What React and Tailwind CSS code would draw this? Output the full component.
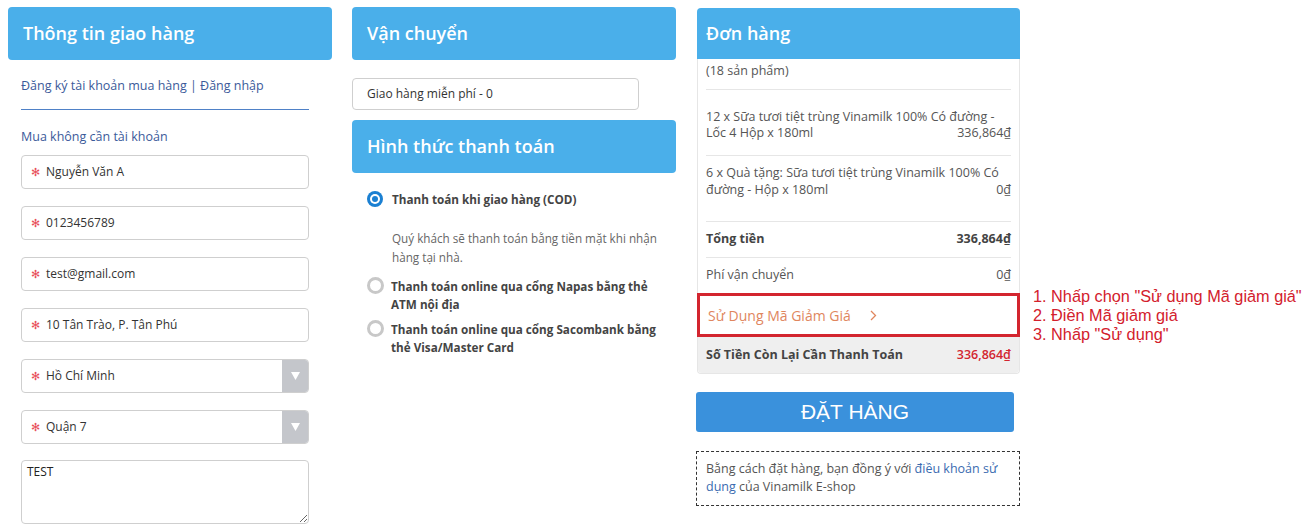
import React from 'react'

// Checkout page: 3 columns (shipping info / shipping + payment / order) + note

const FONT = "font-['Open_Sans',sans-serif]"
const VND = (n) => `${n}\u20ab`

function Header({ title, className = '' }) {
  return (
    <div className={`flex h-[53px] items-center rounded-[4px] bg-[#4aafea] pl-[15px] ${className}`}>
      <span className="text-[18px] font-semibold text-white">{title}</span>
    </div>
  )
}

function Field({ value, select }) {
  return (
    <div className="flex h-[34px] w-[288px] items-stretch overflow-hidden rounded-[4px] border border-[#cfcfcf] bg-white">
      <div className="flex flex-1 items-center pl-[9px] text-[12px] text-[#333]">
        <span className="mr-[6px] text-[11px] text-[#e8505b]">{'\u273b'}</span>
        {value}
      </div>
      {select && (
        <div className="flex w-[26px] items-center justify-center bg-[#c4c6cb]">
          <svg width="9" height="8" viewBox="0 0 9 8">
            <path d="M0 0 H9 L4.5 8 Z" fill="#fff" />
          </svg>
        </div>
      )}
    </div>
  )
}

function Radio({ checked }) {
  return checked ? (
    <span className="grid h-[16px] w-[16px] shrink-0 place-items-center rounded-full bg-[#1b80d2]">
      <span className="grid h-[10px] w-[10px] place-items-center rounded-full bg-white">
        <span className="block h-[6px] w-[6px] rounded-full bg-[#1b80d2]" />
      </span>
    </span>
  ) : (
    <span className="block h-[17px] w-[17px] shrink-0 rounded-full border-[3px] border-[#c8c8c8] bg-white" />
  )
}

export default function App() {
  return (
    <div className={`flex h-[526px] w-[1308px] items-start overflow-hidden bg-white pl-[8px] ${FONT}`}>
      {/* column 1 */}
      <div className="mt-[7px] w-[324px] shrink-0">
        <Header title={'Th\u00f4ng tin giao h\u00e0ng'} />
        <div className="pl-[13px]">
          <div className="mt-[16px] w-[288px] border-b border-[#4f81c7] pb-[13px] text-[12.5px] leading-[20px] text-[#3b5a9a]">
            {'\u0110\u0103ng k\u00fd t\u00e0i kho\u1ea3n mua h\u00e0ng | \u0110\u0103ng nh\u1eadp'}
          </div>
          <div className="mt-[17px] text-[12.5px] leading-[20px] text-[#3b5a9a]">
            {'Mua kh\u00f4ng c\u1ea7n t\u00e0i kho\u1ea3n'}
          </div>
          <div className="mt-[8px] flex flex-col gap-[17px]">
            <Field value={'Nguy\u1ec5n V\u0103n A'} />
            <Field value="0123456789" />
            <Field value="test@gmail.com" />
            <Field value={'10 T\u00e2n Tr\u00e0o, P. T\u00e2n Ph\u00fa'} />
            <Field value={'H\u1ed3 Ch\u00ed Minh'} select />
            <Field value={'Qu\u1eadn 7'} select />
          </div>
          <textarea
            defaultValue="TEST"
            className="mt-[16px] block h-[64px] w-[288px] rounded-[4px] border border-[#cfcfcf] px-[5px] py-[2px] text-[12px] text-[#222] outline-none"
          />
        </div>
      </div>

      {/* column 2 */}
      <div className="ml-[20px] mt-[7px] w-[324px] shrink-0">
        <Header title={'V\u1eadn chuy\u1ec3n'} />
        <div className="mt-[18px] flex h-[32px] w-[287px] items-center rounded-[4px] border border-[#cfcfcf] pl-[14px] text-[12px] text-[#333]">
          {'Giao h\u00e0ng mi\u1ec5n ph\u00ed - 0'}
        </div>
        <Header title={'H\u00ecnh th\u1ee9c thanh to\u00e1n'} className="mt-[10px]" />
        <div className="pl-[15px] text-[11.7px] text-[#444]">
          <div className="mt-[17px] flex items-center gap-[9px] leading-[18px]">
            <Radio checked />
            <span className="font-bold">{'Thanh to\u00e1n khi giao h\u00e0ng (COD)'}</span>
          </div>
          <p className="mt-[21px] pl-[25px] leading-[19px] text-[#666]">
            {'Qu\u00fd kh\u00e1ch s\u1ebd thanh to\u00e1n b\u1eb1ng ti\u1ec1n m\u1eb7t khi nh\u1eadn'}
            <br />
            {'h\u00e0ng t\u1ea1i nh\u00e0.'}
          </p>
          <div className="mt-[10px] flex items-start gap-[7px] leading-[18px]">
            <Radio />
            <span className="font-bold">
              {'Thanh to\u00e1n online qua c\u1ed5ng Napas b\u1eb1ng th\u1ebb'}
              <br />
              {'ATM n\u1ed9i \u0111\u1ecba'}
            </span>
          </div>
          <div className="mt-[7px] flex items-start gap-[7px] leading-[18px]">
            <Radio />
            <span className="font-bold">
              {'Thanh to\u00e1n online qua c\u1ed5ng Sacombank b\u1eb1ng'}
              <br />
              {'th\u1ebb Visa/Master Card'}
            </span>
          </div>
        </div>
      </div>

      {/* column 3: order */}
      <div className="ml-[21px] mt-[8px] w-[323px] shrink-0">
        <div className="flex h-[51px] items-center rounded-t-[4px] bg-[#4aafea] pl-[9px]">
          <span className="text-[18px] font-semibold text-white">{'\u0110\u01a1n h\u00e0ng'}</span>
        </div>
        <div className="rounded-b-[4px] border border-t-0 border-[#e6e6e6] text-[12.5px] text-[#555]">
          <div className="px-[8px]">
            <div className="border-b border-[#e6e6e6] pb-[8px] pt-[2px] leading-[20px]">
              {'(18 s\u1ea3n ph\u1ea9m)'}
            </div>
            <div className="border-b border-[#e6e6e6] pb-[14px] pt-[19px] leading-[16px]">
              <div>{'12 x S\u1eefa t\u01b0\u01a1i ti\u1ec7t tr\u00f9ng Vinamilk 100% C\u00f3 \u0111\u01b0\u1eddng -'}</div>
              <div className="flex justify-between">
                <span>{'L\u1ed1c 4 H\u1ed9p x 180ml'}</span>
                <span>{VND('336,864')}</span>
              </div>
            </div>
            <div className="border-b border-[#e6e6e6] pb-[23px] pt-[8px] leading-[17px]">
              <div>{'6 x Qu\u00e0 t\u1eb7ng: S\u1eefa t\u01b0\u01a1i ti\u1ec7t tr\u00f9ng Vinamilk 100% C\u00f3'}</div>
              <div className="flex justify-between">
                <span>{'\u0111\u01b0\u1eddng - H\u1ed9p x 180ml'}</span>
                <span>{VND('0')}</span>
              </div>
            </div>
            <div className="flex h-[36px] items-center justify-between border-b border-[#e6e6e6] font-bold text-[#444]">
              <span>{'T\u1ed5ng ti\u1ec1n'}</span>
              <span>{VND('336,864')}</span>
            </div>
            <div className="flex h-[35px] items-center justify-between">
              <span>{'Ph\u00ed v\u1eadn chuy\u1ec3n'}</span>
              <span>{VND('0')}</span>
            </div>
          </div>
          <div className="-mx-[1px] flex h-[44px] items-center border-[3px] border-[#d3252f] pl-[8px] text-[14px] text-[#e0865e]">
            {'S\u1eed D\u1ee5ng M\u00e3 Gi\u1ea3m Gi\u00e1'}
            <svg className="ml-[19px]" width="7" height="11" viewBox="0 0 7 11">
              <path d="M1 1 L5.5 5.5 L1 10" fill="none" stroke="#e0865e" strokeWidth="1.3" />
            </svg>
          </div>
          <div className="flex h-[36px] items-center justify-between rounded-b-[4px] bg-[#efefef] px-[8px] font-bold text-[#444]">
            <span>{'S\u1ed1 Ti\u1ec1n C\u00f2n L\u1ea1i C\u1ea7n Thanh To\u00e1n'}</span>
            <span className="font-semibold text-[#d3252f]">{VND('336,864')}</span>
          </div>
        </div>

        <button className="-ml-[1px] mt-[18px] h-[40px] w-[318px] rounded-[3px] bg-[#3a91dc] font-['Liberation_Sans',Arial,sans-serif] text-[21px] text-white">
          {'\u0110\u1eb6T H\u00c0NG'}
        </button>
        <div className="-ml-[1px] mt-[19px] h-[55px] w-[324px] border border-dashed border-[#333] px-[9px] pt-[8px] text-[12.5px] leading-[18px] text-[#555]">
          {'B\u1eb1ng c\u00e1ch \u0111\u1eb7t h\u00e0ng, b\u1ea1n \u0111\u1ed3ng \u00fd v\u1edbi '}
          <span className="text-[#3a6bb0]">{'\u0111i\u1ec1u kho\u1ea3n s\u1eed d\u1ee5ng'}</span>
          {' c\u1ee7a Vinamilk E-shop'}
        </div>
      </div>

      {/* red instruction note */}
      <div className="ml-[13px] mt-[287px] shrink-0 whitespace-nowrap font-['Liberation_Sans',Arial,sans-serif] text-[16.3px] leading-[19px] text-[#d3202c]">
        <div>{'1. Nh\u1ea5p ch\u1ecdn "S\u1eed d\u1ee5ng M\u00e3 gi\u1ea3m gi\u00e1"'}</div>
        <div>{'2. \u0110i\u1ec1n M\u00e3 gi\u1ea3m gi\u00e1'}</div>
        <div>{'3. Nh\u1ea5p "S\u1eed d\u1ee5ng"'}</div>
      </div>
    </div>
  )
}
